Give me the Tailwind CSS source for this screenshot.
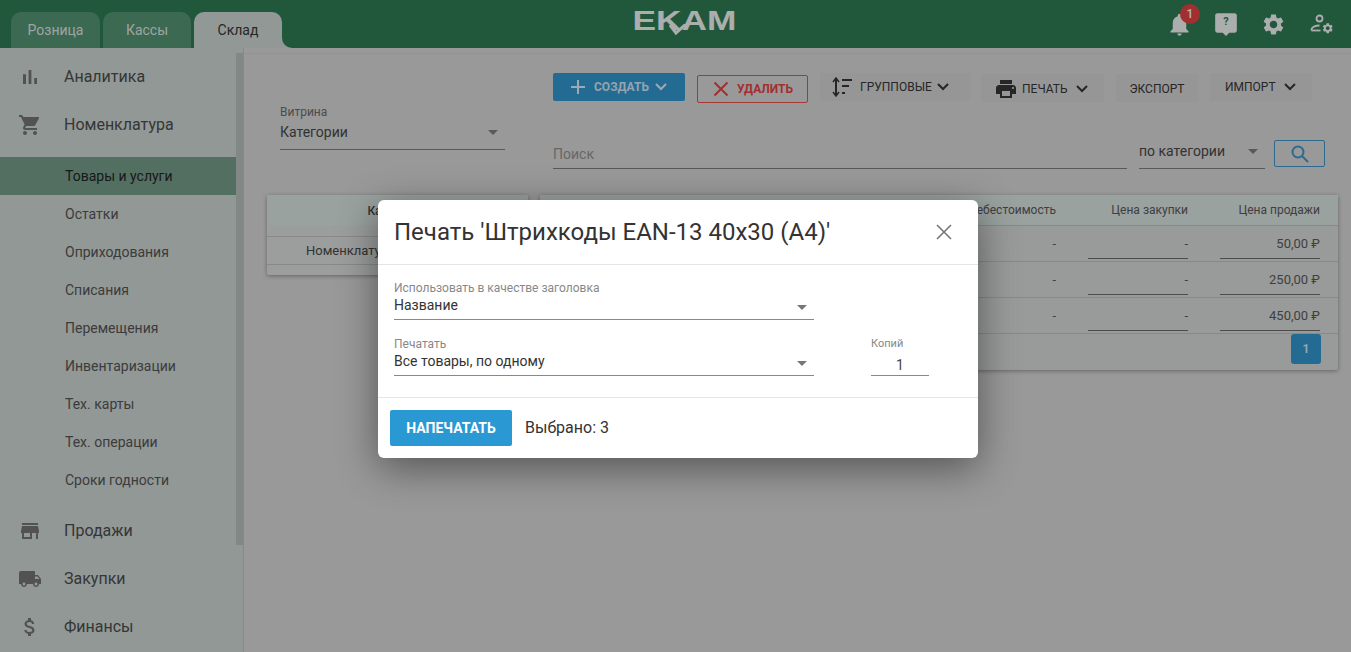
<!DOCTYPE html>
<html lang="ru">
<head>
  <meta charset="UTF-8">
  <title>EKAM</title>
  <script src="https://cdn.jsdelivr.net/npm/@tailwindcss/browser@4"></script>
</head>
<body class="relative h-[652px] w-[1351px] overflow-hidden bg-[#cccccc] font-['Roboto',sans-serif] text-[#444]">

  <!-- Header -->
  <header class="relative flex h-12 items-end bg-[#2c7651] pl-[11px]">
    <div class="flex gap-[3px]">
      <div class="flex h-9 w-[89px] items-center justify-center rounded-t-[10px] bg-[#4f8c6e] text-sm text-[#d5ddd9]">Розница</div>
      <div class="flex h-9 w-[88px] items-center justify-center rounded-t-[10px] bg-[#4f8c6e] text-sm text-[#d5ddd9]">Кассы</div>
      <div class="relative flex h-9 w-[88px] items-center justify-center rounded-t-[10px] bg-[#c3cbc8] text-sm text-[#333]">
        Склад
        <span class="absolute bottom-0 left-full h-2.5 w-2.5 bg-[#c3cbc8]"><span class="block h-full w-full rounded-bl-[10px] bg-[#2c7651]"></span></span>
      </div>
    </div>
    <!-- logo -->
    <div class="absolute left-[634px] top-[6px] flex h-[30px] w-[101px] items-center justify-center font-['Liberation_Sans',sans-serif] text-[28px] font-bold leading-none text-[#e4e8e6] scale-x-[1.26]">EKAM</div>
    <svg viewBox="0 0 20 12" class="absolute left-[668px] top-[24px] h-3 w-5 fill-none stroke-[#e4e8e6] stroke-[3]"><path d="M2 1l6 8 10-9"/></svg>
    <div class="absolute right-[17px] top-0 flex h-12 items-center text-[#e4e8e6]">
      <div class="relative h-[27px] w-[27px]">
        <svg viewBox="0 0 24 24" class="h-[27px] w-[27px] fill-current"><path d="M12 22c1.1 0 2-.9 2-2h-4c0 1.1.89 2 2 2zm6-6v-5c0-3.07-1.64-5.64-4.5-6.32V4c0-.83-.67-1.5-1.5-1.5s-1.5.67-1.5 1.5v.68C7.63 5.36 6 7.92 6 11v5l-2 2v1h16v-1l-2-2z"/></svg>
        <span class="absolute -top-[7px] left-[14px] flex h-5 w-5 items-center justify-center rounded-full bg-[#d93f3f] text-xs font-medium text-[#eee]">1</span>
      </div>
      <div class="relative ml-[20px] h-[26px] w-[26px]">
        <svg viewBox="0 0 24 24" class="h-[26px] w-[26px] fill-current"><path d="M20 2H4c-1.1 0-2 .9-2 2v14c0 1.1.9 2 2 2h5l3 3 3-3h5c1.1 0 2-.9 2-2V4c0-1.1-.9-2-2-2z"/></svg>
        <span class="absolute inset-x-0 top-[4px] text-center text-[11px] font-bold leading-[14px] text-[#2c7651]">?</span>
      </div>
      <svg viewBox="0 0 24 24" class="ml-[22px] h-[25px] w-[25px] fill-current"><path d="M19.14 12.94c.04-.3.06-.61.06-.94 0-.32-.02-.64-.07-.94l2.03-1.58c.18-.14.23-.41.12-.61l-1.92-3.32c-.12-.22-.37-.29-.59-.22l-2.39.96c-.5-.38-1.03-.7-1.62-.94l-.36-2.54c-.04-.24-.24-.41-.48-.41h-3.84c-.24 0-.43.17-.47.41l-.36 2.54c-.59.24-1.13.57-1.62.94l-2.39-.96c-.22-.08-.47 0-.59.22L2.74 8.87c-.12.21-.08.47.12.61l2.03 1.58c-.05.3-.09.63-.09.94s.02.64.07.94l-2.03 1.58c-.18.14-.23.41-.12.61l1.92 3.32c.12.22.37.29.59.22l2.39-.96c.5.38 1.03.7 1.62.94l.36 2.54c.05.24.24.41.48.41h3.84c.24 0 .44-.17.47-.41l.36-2.54c.59-.24 1.13-.56 1.62-.94l2.39.96c.22.08.47 0 .59-.22l1.92-3.32c.12-.22.07-.47-.12-.61l-2.01-1.58zM12 15.6c-1.98 0-3.6-1.62-3.6-3.6s1.62-3.6 3.6-3.6 3.6 1.62 3.6 3.6-1.62 3.6-3.6 3.6z"/></svg>
      <svg viewBox="0 0 24 24" class="ml-[24px] h-6 w-6">
        <g class="fill-none stroke-current stroke-[1.8]">
          <circle cx="9.5" cy="6.5" r="3"/>
          <path d="M1.5 18.5v-1c0-2.4 4-4 8-4"/><path d="M1.5 18.5h9"/>
        </g>
        <path transform="translate(11.5,10) scale(.52)" class="fill-current" d="M19.14 12.94c.04-.3.06-.61.06-.94 0-.32-.02-.64-.07-.94l2.03-1.58c.18-.14.23-.41.12-.61l-1.92-3.32c-.12-.22-.37-.29-.59-.22l-2.39.96c-.5-.38-1.03-.7-1.62-.94l-.36-2.54c-.04-.24-.24-.41-.48-.41h-3.84c-.24 0-.43.17-.47.41l-.36 2.54c-.59.24-1.13.57-1.62.94l-2.39-.96c-.22-.08-.47 0-.59.22L2.74 8.87c-.12.21-.08.47.12.61l2.03 1.58c-.05.3-.09.63-.09.94s.02.64.07.94l-2.03 1.58c-.18.14-.23.41-.12.61l1.92 3.32c.12.22.37.29.59.22l2.39-.96c.5.38 1.03.7 1.62.94l.36 2.54c.05.24.24.41.48.41h3.84c.24 0 .44-.17.47-.41l.36-2.54c.59-.24 1.13-.56 1.62-.94l2.39.96c.22.08.47 0 .59-.22l1.92-3.32c.12-.22.07-.47-.12-.61l-2.01-1.58zM12 15.6c-1.98 0-3.6-1.62-3.6-3.6s1.62-3.6 3.6-3.6 3.6 1.62 3.6 3.6-1.62 3.6-3.6 3.6z"/>
      </svg>
    </div>
  </header>

  <div class="flex h-[604px]">
    <!-- Sidebar -->
    <aside class="relative flex w-[243px] shrink-0 flex-col bg-[#c3cbc8] pt-[5px] pr-[7px]">
      <div class="flex h-12 items-center gap-[22px] pl-[18px] text-base text-[#484848]">
        <svg viewBox="0 0 24 24" class="h-6 w-6 fill-[#6e6e6e]"><path d="M5 9.2h3V19H5zM10.6 5h2.8v14h-2.8zm5.6 8H19v6h-2.8z"/></svg>
        Аналитика
      </div>
      <div class="flex h-12 items-center gap-[22px] pl-[18px] text-base text-[#484848]">
        <svg viewBox="0 0 24 24" class="h-6 w-6 fill-[#6e6e6e]"><path d="M7 18c-1.1 0-1.99.9-1.99 2S5.9 22 7 22s2-.9 2-2-.9-2-2-2zM1 2v2h2l3.6 7.59-1.35 2.45c-.16.28-.25.61-.25.96 0 1.1.9 2 2 2h12v-2H7.42c-.14 0-.25-.11-.25-.25l.03-.12.9-1.63h7.45c.75 0 1.41-.41 1.75-1.03l3.58-6.49c.08-.14.12-.31.12-.48 0-.55-.45-1-1-1H5.21l-.94-2H1zm16 16c-1.1 0-1.99.9-1.99 2s.89 2 1.99 2 2-.9 2-2-.9-2-2-2z"/></svg>
        Номенклатура
      </div>
      <ul class="mt-2 text-sm text-[#505050]">
        <li class="flex h-[38px] items-center bg-[#6f9582] pl-[65px] text-[#222]">Товары и услуги</li>
        <li class="flex h-[38px] items-center pl-[65px]">Остатки</li>
        <li class="flex h-[38px] items-center pl-[65px]">Оприходования</li>
        <li class="flex h-[38px] items-center pl-[65px]">Списания</li>
        <li class="flex h-[38px] items-center pl-[65px]">Перемещения</li>
        <li class="flex h-[38px] items-center pl-[65px]">Инвентаризации</li>
        <li class="flex h-[38px] items-center pl-[65px]">Тех. карты</li>
        <li class="flex h-[38px] items-center pl-[65px]">Тех. операции</li>
        <li class="flex h-[38px] items-center pl-[65px]">Сроки годности</li>
      </ul>
      <div class="mt-2 flex h-12 items-center gap-[22px] pl-[18px] text-base text-[#484848]">
        <svg viewBox="0 0 24 24" class="h-6 w-6 fill-[#6e6e6e]"><path d="M20 4H4v2h16V4zm1 10v-2l-1-5H4l-1 5v2h1v6h10v-6h4v6h2v-6h1zm-9 4H6v-4h6v4z"/></svg>
        Продажи
      </div>
      <div class="flex h-12 items-center gap-[22px] pl-[18px] text-base text-[#484848]">
        <svg viewBox="0 0 24 24" class="h-6 w-6 fill-[#6e6e6e]"><path d="M20 8h-3V4H3c-1.1 0-2 .9-2 2v11h2c0 1.66 1.34 3 3 3s3-1.34 3-3h6c0 1.66 1.34 3 3 3s3-1.34 3-3h2v-5l-3-4zM6 18.5c-.83 0-1.5-.67-1.5-1.5s.67-1.5 1.5-1.5 1.5.67 1.5 1.5-.67 1.5-1.5 1.5zm13.5-9l1.96 2.5H17V9.5h2.5zm-1.5 9c-.83 0-1.5-.67-1.5-1.5s.67-1.5 1.5-1.5 1.5.67 1.5 1.5-.67 1.5-1.5 1.5z"/></svg>
        Закупки
      </div>
      <div class="flex h-12 items-center gap-[22px] pl-[18px] text-base text-[#484848]">
        <svg viewBox="0 0 24 24" class="h-6 w-6 fill-[#6e6e6e]"><path d="M11.8 10.9c-2.27-.59-3-1.2-3-2.15 0-1.09 1.01-1.85 2.7-1.85 1.78 0 2.44.85 2.5 2.1h2.21c-.07-1.72-1.12-3.3-3.21-3.81V3h-3v2.16c-1.94.42-3.5 1.68-3.5 3.61 0 2.31 1.91 3.46 4.7 4.13 2.5.6 3 1.48 3 2.41 0 .69-.49 1.79-2.7 1.79-2.06 0-2.87-.92-2.98-2.1h-2.2c.12 2.19 1.76 3.42 3.68 3.83V21h3v-2.15c1.95-.37 3.5-1.5 3.5-3.55 0-2.84-2.43-3.81-4.7-4.4z"/></svg>
        Финансы
      </div>
      <!-- scrollbar thumb -->
      <div class="absolute right-0 top-[5px] h-[492px] w-[7px] bg-[#aeb6b3]"></div>
    </aside>

    <!-- Content -->
    <main class="relative flex-1 border-l border-[#b5b8b6]">
      <div class="mt-[5px] border-t border-[#bcc6c2]"></div>

      <div class="flex">
        <!-- left column -->
        <div class="w-[309px] shrink-0">
          <div class="ml-[36px] mt-[51px] w-[225px] border-b border-[#777] pb-1">
            <div class="text-xs leading-[14px] text-[#666]">Витрина</div>
            <div class="flex h-[26px] items-center justify-between pr-[7px] text-sm text-[#444]">
              Категории
              <svg viewBox="0 0 10 5" class="h-[5px] w-2.5 fill-[#777]"><path d="M0 0l5 5 5-5z"/></svg>
            </div>
          </div>
        </div>

        <!-- toolbar and search -->
        <div class="flex-1">
          <div class="mt-[19px] flex h-[30px] items-start text-xs font-medium">
            <div class="flex h-7 w-[132px] items-center gap-[9px] rounded-[2px] bg-[#2f8fc4] pl-[17px] font-bold text-[#c5dbe8]">
              <svg viewBox="0 0 16 16" class="h-4 w-4 stroke-[#d3e3ec] stroke-2"><path d="M8 1v14M1 8h14"/></svg>
              <span class="-ml-[1px]">СОЗДАТЬ</span>
              <svg viewBox="0 0 12 8" class="-ml-[3px] h-2 w-3 fill-none stroke-[#d3e3ec] stroke-2"><path d="M1 1l5 5 5-5"/></svg>
            </div>
            <div class="ml-3 mt-0.5 flex h-7 w-[111px] items-center gap-[8px] rounded-[2px] border border-[#dd4a4a] pl-[15px] font-bold text-[#d84040]">
              <svg viewBox="0 0 16 16" class="h-4 w-4 fill-none stroke-[#d84040] stroke-2"><path d="M1.5 1.5l13 13M14.5 1.5l-13 13"/></svg>
              УДАЛИТЬ
            </div>
            <div class="ml-3 flex h-7 w-[150px] items-center gap-[6px] rounded-[2px] bg-[#c8c8c8] pl-[12px] font-normal text-[#333]">
              <svg viewBox="0 0 22 20" class="h-5 w-[22px] fill-none stroke-[#333] stroke-2"><path d="M4 2v16"/><path d="M1 5l3-4 3 4M1 15l3 4 3-4" stroke-width="1.5"/><path d="M10 3h10M10 9h7M10 16h3"/></svg>
              ГРУППОВЫЕ
              <svg viewBox="0 0 12 8" class="-ml-[1px] h-2 w-3 fill-none stroke-[#333] stroke-2"><path d="M1 1l5 5 5-5"/></svg>
            </div>
            <div class="ml-[11px] mt-px flex h-7 w-[123px] items-center gap-1 rounded-[2px] bg-[#c8c8c8] pl-[13px] pt-px font-normal text-[#333]">
              <svg viewBox="0 0 24 24" class="h-6 w-6 fill-[#333]"><path d="M19 8H5c-1.66 0-3 1.34-3 3v6h4v4h12v-4h4v-6c0-1.66-1.34-3-3-3zm-3 11H8v-5h8v5zm3-7c-.55 0-1-.45-1-1s.45-1 1-1 1 .45 1 1-.45 1-1 1zm-1-9H6v4h12V3z"/></svg>
              ПЕЧАТЬ
              <svg viewBox="0 0 12 8" class="ml-1 h-2 w-3 fill-none stroke-[#333] stroke-2"><path d="M1 1l5 5 5-5"/></svg>
            </div>
            <div class="ml-3 mt-px flex h-7 w-[82px] items-center justify-center rounded-[2px] bg-[#c8c8c8] pt-px font-normal text-[#333]">ЭКСПОРТ</div>
            <div class="ml-3 flex h-7 w-[102px] items-center gap-2 rounded-[2px] bg-[#c8c8c8] pl-[15px] font-normal text-[#333]">
              ИМПОРТ
              <svg viewBox="0 0 12 8" class="h-2 w-3 fill-none stroke-[#333] stroke-2"><path d="M1 1l5 5 5-5"/></svg>
            </div>
          </div>
          <div class="mt-[37px] flex items-start">
            <div class="flex h-[29px] w-[574px] items-center border-b border-[#777] text-sm text-[#8a8a8a]">Поиск</div>
            <div class="ml-3 flex h-[29px] w-[126px] items-center justify-between border-b border-[#777] pb-[6px] pr-[7px] text-sm text-[#444]">
              по категории
              <svg viewBox="0 0 10 5" class="h-[5px] w-2.5 fill-[#777]"><path d="M0 0l5 5 5-5z"/></svg>
            </div>
            <div class="ml-[9px] flex h-[27px] w-[51px] items-center justify-center rounded-[2px] border border-[#3a8fc0]">
              <svg viewBox="0 0 20 20" class="h-5 w-5 fill-none stroke-[#3a8fc0] stroke-2"><circle cx="8" cy="8" r="5.5"/><path d="M12 12l6 6"/></svg>
            </div>
          </div>
        </div>
      </div>

      <!-- Tables -->
      <div class="absolute left-[23px] top-[147px] h-[80px] w-[261px] rounded-[2px] bg-[#cfd3d1] shadow-[0_1px_4px_rgba(0,0,0,0.35)]">
        <div class="h-[30px] bg-[#cdd8d4] pr-[2px] pt-2 text-center text-xs font-medium text-[#444]">Категории</div>
        <div class="mt-[11px] flex h-[29px] items-center border-y border-[#b5b9b7] pl-[39px] text-[13px] text-[#444]">Номенклатура</div>
      </div>
      <div class="absolute left-[296px] top-[147px] w-[798px] rounded-[2px] bg-[#cccfce] text-[13px] text-[#555] shadow-[0_1px_4px_rgba(0,0,0,0.35)]">
        <div class="flex h-[31px] items-center justify-end gap-8 border-b border-[#b5b9b7] bg-[#cdd8d4] pr-[18px] text-xs">
          <span class="w-[100px] text-right">Себестоимость</span>
          <span class="w-[100px] text-right">Цена закупки</span>
          <span class="w-[100px] text-right">Цена продажи</span>
        </div>
        <div class="flex h-9 justify-end gap-8 border-b border-[#b5b9b7] pr-[18px]">
          <span class="w-[100px] pt-2 text-right">-</span>
          <span class="h-[33px] w-[100px] border-b border-[#666] pt-2 text-right">-</span>
          <span class="h-[33px] w-[100px] border-b border-[#666] pt-2 text-right">50,00 ₽</span>
        </div>
        <div class="flex h-9 justify-end gap-8 border-b border-[#b5b9b7] pr-[18px]">
          <span class="w-[100px] pt-2 text-right">-</span>
          <span class="h-[33px] w-[100px] border-b border-[#666] pt-2 text-right">-</span>
          <span class="h-[33px] w-[100px] border-b border-[#666] pt-2 text-right">250,00 ₽</span>
        </div>
        <div class="flex h-9 justify-end gap-8 border-b border-[#b5b9b7] pr-[18px]">
          <span class="w-[100px] pt-2 text-right">-</span>
          <span class="h-[33px] w-[100px] border-b border-[#666] pt-2 text-right">-</span>
          <span class="h-[33px] w-[100px] border-b border-[#666] pt-2 text-right">450,00 ₽</span>
        </div>
        <div class="flex h-[36px] justify-end pr-[17px]">
          <span class="flex h-[30px] w-[30px] items-center justify-center rounded-[3px] bg-[#2f8fc4] text-xs font-bold text-[#c5dbe8]">1</span>
        </div>
      </div>
    </main>
  </div>

  <!-- Dialog -->
  <div class="absolute inset-0 bg-black/25">
    <div class="absolute left-[378px] top-[200px] w-[600px] rounded-md bg-white text-[#333] shadow-[0_10px_40px_rgba(0,0,0,0.45)]">
      <div class="flex h-[65px] items-center justify-between border-b border-[#e5e5e5] pl-4 pr-[26px]">
        <h2 class="text-2xl font-normal text-[#333]">Печать 'Штрихкоды EAN-13 40x30 (A4)'</h2>
        <svg viewBox="0 0 16 16" class="h-4 w-4 fill-none stroke-[#777] stroke-[1.6]"><path d="M1 1l14 14M15 1L1 15"/></svg>
      </div>
      <div class="h-[133px] border-b border-[#e5e5e5] pl-4">
        <div class="w-[420px] border-b border-[#888] pt-4">
          <div class="text-xs leading-[14px] text-[#888]">Использовать в качестве заголовка</div>
          <div class="flex h-[24px] items-center justify-between pb-1 pr-[7px] text-sm text-[#333]">
            Название
            <svg viewBox="0 0 10 5" class="mt-1 h-[5px] w-2.5 fill-[#777]"><path d="M0 0l5 5 5-5z"/></svg>
          </div>
        </div>
        <div class="mt-[17px] flex items-end">
          <div class="w-[420px] border-b border-[#888]">
            <div class="text-xs leading-[14px] text-[#888]">Печатать</div>
            <div class="flex h-[24px] items-center justify-between pb-1 pr-[7px] text-sm text-[#333]">
              Все товары, по одному
              <svg viewBox="0 0 10 5" class="mt-1 h-[5px] w-2.5 fill-[#777]"><path d="M0 0l5 5 5-5z"/></svg>
            </div>
          </div>
          <div class="ml-[57px] w-[58px] border-b border-[#888]">
            <div class="text-[11px] leading-[14px] text-[#888]">Копий</div>
            <div class="flex h-[24px] items-center justify-center pt-1 text-sm text-[#444]">1</div>
          </div>
        </div>
      </div>
      <div class="flex h-[60px] items-center pl-3">
        <button class="h-9 w-[122px] rounded-[2px] bg-[#2a98d2] text-sm font-bold text-white">НАПЕЧАТАТЬ</button>
        <span class="ml-[13px] text-base text-[#333]">Выбрано: 3</span>
      </div>
    </div>
  </div>

</body>
</html>
